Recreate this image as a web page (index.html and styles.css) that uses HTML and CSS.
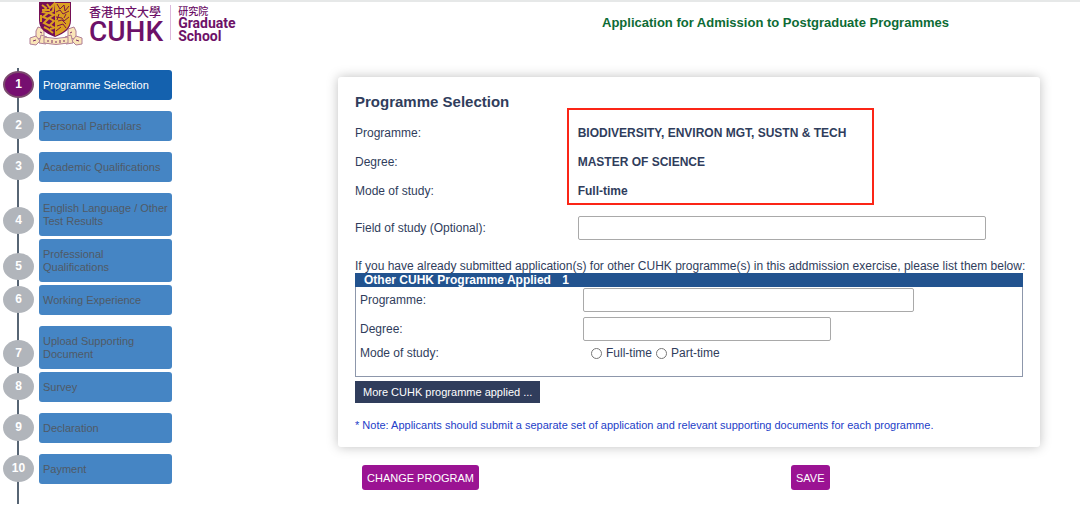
FILE: index.html
```
<!DOCTYPE html>
<html lang="en">

<head>
    <meta charset="UTF-8">
    <meta name="viewport" content="width=device-width, initial-scale=1.0">
    <title>Application for Admission to Postgraduate Programmes</title>
    <link rel="stylesheet" href="styles.css">
</head>

<body>

    <header class="top">
        <a class="logo" href="#" aria-label="CUHK Graduate School">
            <svg class="crest" viewBox="0 0 54 44" width="54" height="44">
                <!-- ribbon -->
                <g fill="#fae5b8" stroke="#b07f95" stroke-width="1">
                    <path d="M9 25l6 2v9l-8 1v-8z"/>
                    <path d="M45 25l-6 2v9l8 1v-8z"/>
                    <path d="M1 36l6-2l4 5l-4 4l-6-1z"/>
                    <path d="M53 36l-6-2l-4 5l4 4l6-1z"/>
                    <path d="M12 33l6 2l-1 7l-7-1z"/>
                    <path d="M42 33l-6 2l1 7l7-1z"/>
                    <path d="M15 35q12 3 24 0v6q-12 3-24 0z"/>
                </g>
                <path d="M19 38v2M23 38v3M27 39v2M31 38v3M35 38v2M4 39l3-1M47 38l3 1M11 30l2 1M41 31l2-1" stroke="#7b2c66" stroke-width="1"/>
                <!-- shield -->
                <path d="M10 0H42V18C42 27 36 31 26 35C16 31 10 27 10 18Z" fill="#751056"/>
                <path d="M26 1H41V18C41 26 35 30 26 34Z" fill="#dba021"/>
                <!-- phoenix -->
                <g fill="none" stroke="#dba021" stroke-width="2">
                    <path d="M13 3l4 3l-3 4l5 1l-5 4l5 2l-4 4l6 3"/>
                    <path d="M18 2l3 4l4-4l-1 7l-4 2l5 2l-5 3l5 3l-4 4l5 3"/>
                    <path d="M12 13v7M15 25l4 2l5 4M21 27l4-1M13 8l8 0"/>
                </g>
                <g fill="none" stroke="#7b1648" stroke-width="1">
                    <path d="M28 2l3 5l4-4l1 6l4-5M27 10l4-2l3 4l6-3"/>
                    <path d="M27 15l6 1l2 3l5-4M29 19l4-1l4 4M28 24l6-2l3 4M27 29l5-4M30 12l-2 6M37 12l-2 4"/>
                </g>
            </svg>
            <span class="logo-uni">
                <span class="uni-zh" lang="zh-Hant">香港中文大學</span>
                <span class="uni-en">CUHK</span>
            </span>
            <span class="logo-school">
                <span class="school-zh" lang="zh-Hant">研究院</span>
                <span class="school-en">Graduate<br>School</span>
            </span>
        </a>
        <h1>Application for Admission to Postgraduate Programmes</h1>
    </header>

    <div class="page">
        <nav class="sidebar">
            <ol class="steps">
                <li class="active"><span class="num">1</span><a href="#">Programme Selection</a></li>
                <li><span class="num">2</span><a href="#">Personal Particulars</a></li>
                <li><span class="num">3</span><a href="#">Academic Qualifications</a></li>
                <li class="tall"><span class="num">4</span><a href="#">English Language / Other Test Results</a></li>
                <li class="tall"><span class="num">5</span><a href="#">Professional Qualifications</a></li>
                <li><span class="num">6</span><a href="#">Working Experience</a></li>
                <li class="tall"><span class="num">7</span><a href="#">Upload Supporting Document</a></li>
                <li><span class="num">8</span><a href="#">Survey</a></li>
                <li><span class="num">9</span><a href="#">Declaration</a></li>
                <li><span class="num">10</span><a href="#">Payment</a></li>
            </ol>
        </nav>

        <form class="main">
            <section class="card">
                <h2>Programme Selection</h2>

                <dl class="summary">
                    <dt>Programme:</dt>
                    <dd>BIODIVERSITY, ENVIRON MGT, SUSTN &amp; TECH</dd>
                    <dt>Degree:</dt>
                    <dd>MASTER OF SCIENCE</dd>
                    <dt>Mode of study:</dt>
                    <dd>Full-time</dd>
                </dl>

                <div class="row field-study">
                    <label for="field">Field of study (Optional):</label>
                    <input type="text" id="field" class="w-long">
                </div>

                <p class="intro">If you have already submitted application(s) for other CUHK programme(s) in this addmission exercise, please list them below:</p>

                <div class="other">
                    <h3>Other CUHK Programme Applied <span>1</span></h3>
                    <div class="other-body">
                        <div class="row">
                            <label for="prog1">Programme:</label>
                            <input type="text" id="prog1" class="w-mid">
                        </div>
                        <div class="row">
                            <label for="degree1">Degree:</label>
                            <input type="text" id="degree1" class="w-short">
                        </div>
                        <div class="row mode">
                            <span>Mode of study:</span>
                            <div class="radios">
                                <input type="radio" name="mode1" id="ft1"><label for="ft1">Full-time</label>
                                <input type="radio" name="mode1" id="pt1"><label for="pt1">Part-time</label>
                            </div>
                        </div>
                    </div>
                </div>

                <button type="button" class="more">More CUHK programme applied ...</button>

                <p class="note">* Note: Applicants should submit a separate set of application and relevant supporting documents for each programme.</p>
            </section>

            <div class="actions">
                <button type="button">CHANGE PROGRAM</button>
                <button type="button">SAVE</button>
            </div>
        </form>
    </div>

</body>

</html>
```
FILE: styles.css
```
*,
*::before,
*::after {
    box-sizing: border-box;
}

body {
    margin: 0;
    font-family: "Liberation Sans", Arial, sans-serif;
    font-size: 12px;
    color: #303d5c;
    background-color: #fff;
}

h1, h2, h3, p, dl, dd, ol {
    margin: 0;
    padding: 0;
}

.top {
    display: flex;
    align-items: flex-start;
    height: 68px;
    border-top: 2px solid #e6e8e8;
}

.logo {
    display: flex;
    width: 471px;
    flex-shrink: 0;
    padding-left: 29px;
    color: #6d1168;
    text-decoration: none;
}

.logo span {
    display: block;
}

.logo-uni {
    padding: 3px 7px 0 6px;
}

.uni-zh {
    font: 500 12px/13px "Noto Sans CJK TC", sans-serif;
}

.logo .uni-en {
    font: 500 28px/28px Roboto, sans-serif;
}

.logo-school {
    height: 35px;
    margin-top: 3px;
    padding-left: 7px;
    border-left: 1px solid #dcb8dc;
}

.school-zh {
    font: 500 10px/12px "Noto Sans CJK TC", sans-serif;
}

.school-en {
    font: bold 14px/13px Roboto, sans-serif;
}

h1 {
    flex: 1;
    padding-top: 13px;
    font-size: 13px;
    line-height: 16px;
    text-align: center;
    color: #0d6b35;
}

.page {
    display: flex;
    align-items: flex-start;
}

/* left menu */
.sidebar {
    width: 338px;
    flex-shrink: 0;
}

.steps {
    position: relative;
    width: 172px;
    padding: 2px 0 20px 3px;
    list-style: none;
}

/* vertical line behind the numbers */
.steps::before {
    content: "";
    position: absolute;
    top: 0;
    bottom: 0;
    left: 17px;
    width: 2px;
    background-color: #576574;
}

.steps li {
    display: flex;
    align-items: flex-end;
    gap: 5px;
    margin-bottom: 11px;
}

.steps li:last-child {
    margin-bottom: 0;
}

.steps .tall {
    margin-bottom: 3px;
}

.num {
    position: relative;
    width: 31px;
    height: 27px;
    margin-bottom: 2px;
    border-radius: 50%;
    background-color: #b1b5bb;
    color: #fff;
    font-weight: bold;
    line-height: 27px;
    text-align: center;
}

.steps a {
    display: flex;
    align-items: center;
    flex: 1;
    height: 30px;
    padding: 0 4px;
    border-radius: 3px;
    background-color: #4585c4;
    color: #505a66;
    font-size: 11px;
    line-height: 13px;
    text-decoration: none;
}

.steps .tall a {
    height: 43px;
}

.active .num {
    border: 2px solid #7b4b6d;
    background-color: #760f70;
    line-height: 23px;
}

.steps .active a {
    background-color: #1461ae;
    color: #fff;
}

/* form */
.main {
    flex: 1;
    min-width: 0;
    padding: 9px 40px 0 0;
}

.card {
    padding: 16px 17px 14px;
    border-radius: 3px;
    background-color: #fff;
    box-shadow: 0 0 12px rgba(0, 0, 0, 0.25);
}

h2 {
    font-size: 15px;
    line-height: 18px;
}

.summary {
    position: relative;
    display: grid;
    grid-template-columns: 1fr 2fr;
    margin-top: 8px;
    line-height: 29px;
}

.summary dd {
    font-weight: bold;
}

/* highlight frame over the chosen programme */
.summary::after {
    content: "";
    position: absolute;
    top: -11px;
    bottom: 1px;
    left: calc(33% - 8px);
    width: 307px;
    border: 2px solid #fb2516;
}

.row {
    display: grid;
    grid-template-columns: 1fr 2fr;
    align-items: center;
}

.field-study {
    margin-top: 10px;
}

input[type="text"] {
    height: 24px;
    padding: 0 4px;
    border: 1px solid #a9a9a9;
    border-radius: 2px;
    background-color: #fff;
}

.w-long {
    width: 408px;
}

.w-mid {
    width: 331px;
}

.w-short {
    width: 248px;
}

.intro {
    margin-top: 19px;
    line-height: 14px;
    white-space: nowrap;
}

h3 {
    padding-left: 9px;
    background-color: #22538f;
    color: #fff;
    font-size: 12px;
    line-height: 14px;
}

h3 span {
    margin-left: 8px;
}

.other-body {
    display: grid;
    gap: 5px;
    padding: 1px 0 16px 4px;
    border: 1px solid #8d97ab;
    border-top: none;
}

.other-body .row {
    grid-template-columns: 223px 1fr;
}

.radios {
    display: flex;
    align-items: center;
    padding-left: 8px;
}

.radios input {
    width: 11px;
    height: 11px;
    margin: 0 4px 0 0;
}

.radios label {
    margin-right: 4px;
}

button {
    border: none;
    color: #fff;
    font-family: inherit;
    font-size: 11px;
    cursor: pointer;
}

.more {
    display: block;
    height: 22px;
    margin-top: 4px;
    padding: 0 8px;
    background-color: #303d5c;
}

.note {
    margin-top: 14px;
    color: #2340c8;
    font-size: 11px;
    line-height: 16px;
}

.actions {
    display: grid;
    grid-template-columns: 429px 1fr;
    justify-items: start;
    padding: 18px 0 0 24px;
}

.actions button {
    height: 25px;
    padding: 0 5px;
    border-radius: 3px;
    background-color: #9b1393;
}
```
